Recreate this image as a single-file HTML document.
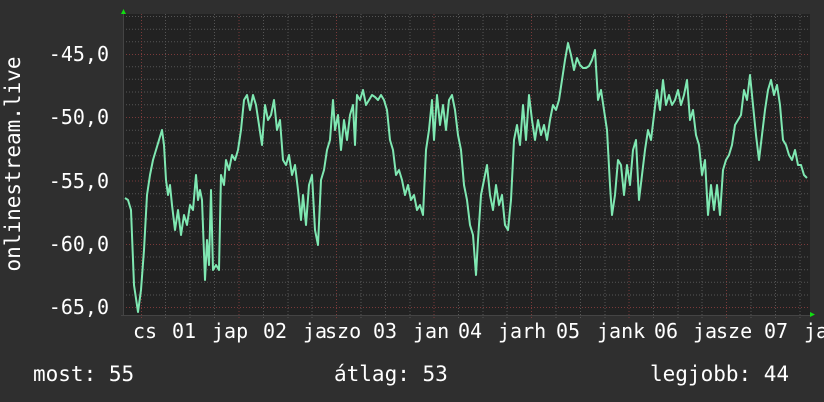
<!DOCTYPE html>
<html><head><meta charset="utf-8"><style>
html,body{margin:0;padding:0;background:#2f2f2f;width:824px;height:402px;overflow:hidden}
svg{display:block}
text{font-family:"DejaVu Sans Mono","Liberation Mono",monospace;fill:#fff;font-size:20px}
.big{font-size:21px}
</style></head><body>
<svg width="824" height="402" viewBox="0 0 824 402">
<rect x="0" y="0" width="824" height="402" fill="#2f2f2f"/>
<rect x="123" y="14" width="687" height="301" fill="#222"/>
<g stroke="#555" stroke-width="1" stroke-dasharray="1,2">
<line x1="123" x2="810" y1="16.5" y2="16.5"/><line x1="123" x2="810" y1="29.2" y2="29.2"/><line x1="123" x2="810" y1="41.8" y2="41.8"/>
<line x1="123" x2="810" y1="66.7" y2="66.7"/><line x1="123" x2="810" y1="79.3" y2="79.3"/><line x1="123" x2="810" y1="92" y2="92"/><line x1="123" x2="810" y1="104.7" y2="104.7"/>
<line x1="123" x2="810" y1="130.3" y2="130.3"/><line x1="123" x2="810" y1="143" y2="143"/><line x1="123" x2="810" y1="155.7" y2="155.7"/><line x1="123" x2="810" y1="168.3" y2="168.3"/>
<line x1="123" x2="810" y1="193.7" y2="193.7"/><line x1="123" x2="810" y1="206.3" y2="206.3"/><line x1="123" x2="810" y1="219" y2="219"/><line x1="123" x2="810" y1="231.7" y2="231.7"/>
<line x1="123" x2="810" y1="257" y2="257"/><line x1="123" x2="810" y1="269.7" y2="269.7"/><line x1="123" x2="810" y1="282.3" y2="282.3"/><line x1="123" x2="810" y1="295" y2="295"/>
<line y1="14" y2="318" x1="165.5" x2="165.5"/><line y1="14" y2="318" x1="190" x2="190"/><line y1="14" y2="318" x1="214.5" x2="214.5"/>
<line y1="14" y2="318" x1="263.5" x2="263.5"/><line y1="14" y2="318" x1="288" x2="288"/><line y1="14" y2="318" x1="312" x2="312"/>
<line y1="14" y2="318" x1="361" x2="361"/><line y1="14" y2="318" x1="385.5" x2="385.5"/><line y1="14" y2="318" x1="410" x2="410"/>
<line y1="14" y2="318" x1="458.5" x2="458.5"/><line y1="14" y2="318" x1="483" x2="483"/><line y1="14" y2="318" x1="507" x2="507"/>
<line y1="14" y2="318" x1="556" x2="556"/><line y1="14" y2="318" x1="580.5" x2="580.5"/><line y1="14" y2="318" x1="605" x2="605"/>
<line y1="14" y2="318" x1="653.5" x2="653.5"/><line y1="14" y2="318" x1="678" x2="678"/><line y1="14" y2="318" x1="702" x2="702"/>
<line y1="14" y2="318" x1="751" x2="751"/><line y1="14" y2="318" x1="775.5" x2="775.5"/><line y1="14" y2="318" x1="800" x2="800"/>
</g>
<g stroke="#7a3a3a" stroke-width="1" stroke-dasharray="1,2">
<line x1="123" x2="810" y1="54.5" y2="54.5"/><line x1="123" x2="810" y1="117.5" y2="117.5"/><line x1="123" x2="810" y1="181" y2="181"/><line x1="123" x2="810" y1="244.5" y2="244.5"/><line x1="123" x2="810" y1="307.5" y2="307.5"/>
<line y1="14" y2="318" x1="141.5" x2="141.5"/><line y1="14" y2="318" x1="239" x2="239"/><line y1="14" y2="318" x1="336.5" x2="336.5"/><line y1="14" y2="318" x1="434" x2="434"/><line y1="14" y2="318" x1="531.5" x2="531.5"/><line y1="14" y2="318" x1="629" x2="629"/><line y1="14" y2="318" x1="726.5" x2="726.5"/>
</g>
<line x1="123.5" y1="12" x2="123.5" y2="316" stroke="#444"/>
<line x1="121" y1="315.5" x2="812" y2="315.5" stroke="#444"/>
<polygon points="121,14 126,14 123.5,9" fill="#1d1"/>
<polygon points="810,312 810,317 815,314.5" fill="#1d1"/>
<polyline fill="none" stroke="#7fe8b2" stroke-width="2" stroke-linejoin="round" points="125,198 128,200 131,210 134,285 138,312 141,290 144,250 147,195 150,175 153,160 156,150 159,140 162,130 164,145 166,180 168,195 170,185 172,205 175,230 178,210 181,235 184,215 187,225 190,205 193,210 196,175 198,200 200,190 202,200 205,280 207,240 209,265 211,190 213,270 216,265 219,270 221,175 224,185 226,160 229,170 232,155 235,160 238,150 241,130 244,100 247,95 250,110 253,95 256,105 259,125 262,145 265,105 268,120 271,115 274,100 277,130 280,120 283,160 286,165 289,155 292,175 295,165 298,190 301,220 303,195 306,225 309,185 312,175 315,230 318,245 321,180 324,170 327,150 330,140 333,100 335,130 338,115 341,150 344,120 347,140 350,115 353,105 355,145 357,95 360,100 363,90 366,105 369,100 372,95 375,97 378,100 381,95 384,100 387,110 390,140 393,150 396,175 399,170 402,180 405,195 408,185 411,200 414,195 417,210 420,205 423,215 426,150 429,130 432,100 434,140 437,95 440,125 443,105 446,130 449,100 452,95 455,110 458,135 461,150 464,185 467,200 470,225 473,235 476,275 478,240 481,195 484,180 487,165 490,195 493,210 496,185 499,205 502,195 505,225 508,230 511,200 514,140 517,125 520,145 523,105 526,140 529,95 532,120 535,140 538,120 541,135 544,125 547,140 550,120 553,105 556,110 559,100 562,80 565,60 568,43 571,55 574,70 577,58 580,65 583,68 586,68 589,66 592,60 595,50 598,100 601,90 604,110 607,130 610,185 612,215 615,195 618,160 621,165 624,195 627,165 630,185 633,150 636,140 639,200 642,175 645,150 648,130 651,140 654,115 657,90 660,110 663,80 666,105 669,95 672,105 675,100 678,90 681,105 684,95 687,80 690,120 693,110 696,135 699,145 702,175 705,160 708,215 711,185 714,210 717,185 720,215 723,170 726,160 729,155 732,145 735,125 738,120 741,115 744,90 747,100 750,75 753,105 756,135 759,160 762,135 765,110 768,90 771,80 774,95 777,85 780,105 783,140 786,145 789,155 792,160 795,150 798,165 801,165 804,175 807,178"/>
<g text-anchor="end">
<text x="109" y="61">-45,0</text><text x="109" y="124">-50,0</text><text x="109" y="188">-55,0</text><text x="109" y="251">-60,0</text><text x="109" y="314">-65,0</text>
</g>
<text class="big" transform="translate(20,164) rotate(-90)" text-anchor="middle">onlinestream.live</text>
<g>
<text x="133" y="338">cs</text><text x="172" y="338">01</text><text x="212" y="338">jap</text><text x="263" y="338">02</text>
<text x="303" y="338">ja</text><text x="325" y="338">szo</text><text x="373" y="338">03</text><text x="413" y="338">jan</text>
<text x="458" y="338">04</text><text x="498" y="338">jarh</text><text x="556" y="338">05</text><text x="597" y="338">jank</text>
<text x="654" y="338">06</text><text x="693" y="338">ja</text><text x="716" y="338">sze</text><text x="764" y="338">07</text><text x="804" y="338">ja</text>
</g>
<text class="big" x="33" y="381">most: 55</text>
<text class="big" x="334" y="381">átlag: 53</text>
<text class="big" x="650" y="381">legjobb: 44</text>
</svg>
</body></html>
